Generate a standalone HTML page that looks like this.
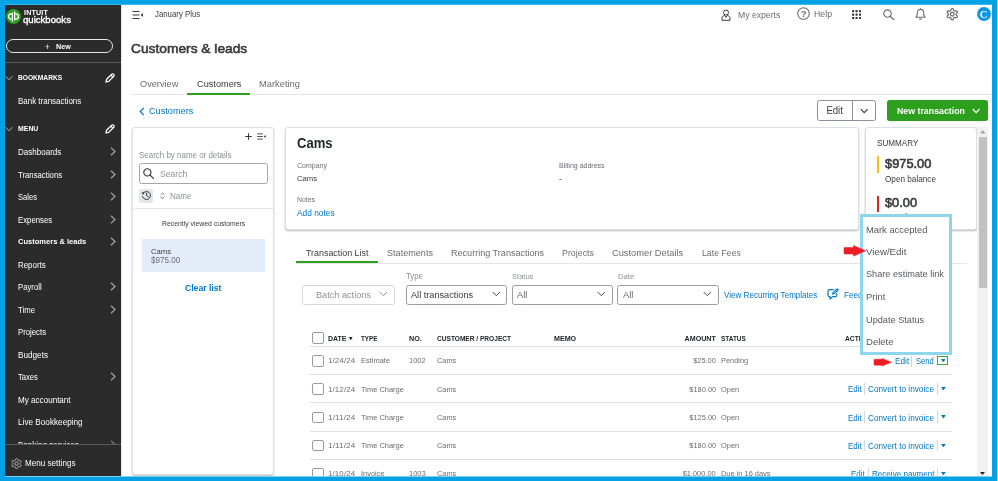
<!DOCTYPE html>
<html><head><meta charset="utf-8"><title>QuickBooks</title>
<style>
html,body{margin:0;padding:0}
body{width:998px;height:481px;overflow:hidden;position:relative;background:#04a1e5;font-family:"Liberation Sans", sans-serif;}
#root{position:absolute;left:0;top:0;width:998px;height:481px;overflow:hidden;filter:blur(0.3px)}
#root span{display:block}
</style></head><body><div id="root">
<div style="position:absolute;left:5px;top:5px;width:987px;height:471px;background:#fff"></div>
<div style="position:absolute;left:5px;top:4px;width:987px;height:1px;background:#35b4ee"></div>
<div style="position:absolute;left:5px;top:4.5px;width:115.6px;height:471.5px;background:#2b2b2b"></div>
<div style="position:absolute;left:120.5px;top:5px;width:1px;height:471px;background:#e4e4e4"></div>
<svg style="position:absolute;left:6px;top:8.7px;" width="15" height="15" viewBox="0 0 15 15"><circle cx="7.5" cy="7.5" r="7.5" fill="#2ca01c"/><g fill="none" stroke="#fff" stroke-width="1.25" stroke-linecap="round"><path d="M6.3 4.9H5.2a2.6 2.6 0 0 0 0 5.2H6.3"/><path d="M6.4 4.2V12.2" /><path d="M8.7 10.1H9.8a2.6 2.6 0 0 0 0-5.2H8.7"/><path d="M8.6 2.8V10.8"/></g></svg>
<span style="position:absolute;top:2.50px;height:20px;line-height:20px;font-size:6.30px;font-weight:700;color:#fff;white-space:pre;left:23.60px;transform-origin:0 50%;transform:scaleX(1.130);letter-spacing:0.15px;">INTUIT</span>
<span style="position:absolute;top:10.20px;height:20px;line-height:20px;font-size:9.70px;font-weight:400;color:#fff;white-space:pre;left:23.00px;transform-origin:0 50%;transform:scaleX(0.989);-webkit-text-stroke:0.35px #fff;">quickbooks</span>
<div style="position:absolute;left:6px;top:39px;width:107px;height:14px;box-sizing:border-box;border:1px solid #e8e8e8;border-radius:7px"></div>
<span style="position:absolute;top:36.90px;height:20px;line-height:20px;font-size:9.00px;font-weight:400;color:#fff;white-space:pre;left:45.00px;transform-origin:0 50%;transform:scaleX(0.913);">+</span>
<span style="position:absolute;top:36.90px;height:20px;line-height:20px;font-size:7.56px;font-weight:700;color:#fff;white-space:pre;left:56.00px;transform-origin:0 50%;transform:scaleX(0.952);">New</span>
<div style="position:absolute;left:5px;top:62px;width:116px;height:1px;background:#5a5a5a"></div>
<svg style="position:absolute;left:5px;top:75.2px;" width="8" height="6" viewBox="0 0 8 6"><path d="M0.6 1.2L4 4.8L7.4 1.2" fill="none" stroke="#b0b0b0" stroke-width="1"/></svg>
<span style="position:absolute;top:68.40px;height:20px;line-height:20px;font-size:6.96px;font-weight:700;color:#fff;white-space:pre;left:17.80px;transform-origin:0 50%;transform:scaleX(0.952);">BOOKMARKS</span>
<svg style="position:absolute;left:105.2px;top:73.3px;" width="10" height="10" viewBox="0 0 10 10"><g fill="none" stroke="#fff" stroke-width="1.25" stroke-linejoin="round"><path d="M1 9L1.6 6.3L6.7 1.2a1.3 1.3 0 0 1 1.9 0l0.2 0.2a1.3 1.3 0 0 1 0 1.9L3.7 8.4Z"/><path d="M5.8 2.1L7.9 4.2"/></g></svg>
<span style="position:absolute;top:91.00px;height:20px;line-height:20px;font-size:8.37px;font-weight:400;color:#fff;white-space:pre;left:17.80px;transform-origin:0 50%;transform:scaleX(0.952);">Bank transactions</span>
<svg style="position:absolute;left:5px;top:125.9px;" width="8" height="6" viewBox="0 0 8 6"><path d="M0.6 1.2L4 4.8L7.4 1.2" fill="none" stroke="#b0b0b0" stroke-width="1"/></svg>
<span style="position:absolute;top:119.10px;height:20px;line-height:20px;font-size:7.27px;font-weight:700;color:#fff;white-space:pre;left:17.80px;transform-origin:0 50%;transform:scaleX(0.952);">MENU</span>
<svg style="position:absolute;left:105.2px;top:124px;" width="10" height="10" viewBox="0 0 10 10"><g fill="none" stroke="#fff" stroke-width="1.25" stroke-linejoin="round"><path d="M1 9L1.6 6.3L6.7 1.2a1.3 1.3 0 0 1 1.9 0l0.2 0.2a1.3 1.3 0 0 1 0 1.9L3.7 8.4Z"/><path d="M5.8 2.1L7.9 4.2"/></g></svg>
<span style="position:absolute;top:141.70px;height:20px;line-height:20px;font-size:8.45px;font-weight:400;color:#fff;white-space:pre;left:17.80px;transform-origin:0 50%;transform:scaleX(0.952);">Dashboards</span>
<svg style="position:absolute;left:109.5px;top:146.89999999999998px;" width="6" height="9" viewBox="0 0 6 9"><path d="M1 0.8L5 4.5L1 8.2" fill="none" stroke="#a0a0a0" stroke-width="1.25"/></svg>
<span style="position:absolute;top:164.50px;height:20px;line-height:20px;font-size:8.45px;font-weight:400;color:#fff;white-space:pre;left:17.80px;transform-origin:0 50%;transform:scaleX(0.919);">Transactions</span>
<svg style="position:absolute;left:109.5px;top:169.7px;" width="6" height="9" viewBox="0 0 6 9"><path d="M1 0.8L5 4.5L1 8.2" fill="none" stroke="#a0a0a0" stroke-width="1.25"/></svg>
<span style="position:absolute;top:187.00px;height:20px;line-height:20px;font-size:8.45px;font-weight:400;color:#fff;white-space:pre;left:17.80px;transform-origin:0 50%;transform:scaleX(0.899);">Sales</span>
<svg style="position:absolute;left:109.5px;top:192.2px;" width="6" height="9" viewBox="0 0 6 9"><path d="M1 0.8L5 4.5L1 8.2" fill="none" stroke="#a0a0a0" stroke-width="1.25"/></svg>
<span style="position:absolute;top:209.50px;height:20px;line-height:20px;font-size:8.45px;font-weight:400;color:#fff;white-space:pre;left:17.80px;transform-origin:0 50%;transform:scaleX(0.921);">Expenses</span>
<svg style="position:absolute;left:109.5px;top:214.7px;" width="6" height="9" viewBox="0 0 6 9"><path d="M1 0.8L5 4.5L1 8.2" fill="none" stroke="#a0a0a0" stroke-width="1.25"/></svg>
<span style="position:absolute;top:232.00px;height:20px;line-height:20px;font-size:7.98px;font-weight:700;color:#fff;white-space:pre;left:17.80px;transform-origin:0 50%;transform:scaleX(0.945);">Customers &amp; leads</span>
<svg style="position:absolute;left:109.5px;top:237.2px;" width="6" height="9" viewBox="0 0 6 9"><path d="M1 0.8L5 4.5L1 8.2" fill="none" stroke="#a0a0a0" stroke-width="1.25"/></svg>
<span style="position:absolute;top:254.50px;height:20px;line-height:20px;font-size:8.45px;font-weight:400;color:#fff;white-space:pre;left:17.80px;transform-origin:0 50%;transform:scaleX(0.936);">Reports</span>
<span style="position:absolute;top:277.00px;height:20px;line-height:20px;font-size:8.45px;font-weight:400;color:#fff;white-space:pre;left:17.80px;transform-origin:0 50%;transform:scaleX(0.917);">Payroll</span>
<svg style="position:absolute;left:109.5px;top:282.2px;" width="6" height="9" viewBox="0 0 6 9"><path d="M1 0.8L5 4.5L1 8.2" fill="none" stroke="#a0a0a0" stroke-width="1.25"/></svg>
<span style="position:absolute;top:299.50px;height:20px;line-height:20px;font-size:8.45px;font-weight:400;color:#fff;white-space:pre;left:17.80px;transform-origin:0 50%;transform:scaleX(0.926);">Time</span>
<svg style="position:absolute;left:109.5px;top:304.7px;" width="6" height="9" viewBox="0 0 6 9"><path d="M1 0.8L5 4.5L1 8.2" fill="none" stroke="#a0a0a0" stroke-width="1.25"/></svg>
<span style="position:absolute;top:322.00px;height:20px;line-height:20px;font-size:8.45px;font-weight:400;color:#fff;white-space:pre;left:17.80px;transform-origin:0 50%;transform:scaleX(0.920);">Projects</span>
<span style="position:absolute;top:344.50px;height:20px;line-height:20px;font-size:8.45px;font-weight:400;color:#fff;white-space:pre;left:17.80px;transform-origin:0 50%;transform:scaleX(0.970);">Budgets</span>
<span style="position:absolute;top:367.00px;height:20px;line-height:20px;font-size:8.45px;font-weight:400;color:#fff;white-space:pre;left:17.80px;transform-origin:0 50%;transform:scaleX(0.897);">Taxes</span>
<svg style="position:absolute;left:109.5px;top:372.2px;" width="6" height="9" viewBox="0 0 6 9"><path d="M1 0.8L5 4.5L1 8.2" fill="none" stroke="#a0a0a0" stroke-width="1.25"/></svg>
<span style="position:absolute;top:389.50px;height:20px;line-height:20px;font-size:8.45px;font-weight:400;color:#fff;white-space:pre;left:17.80px;transform-origin:0 50%;transform:scaleX(0.959);">My accountant</span>
<span style="position:absolute;top:412.00px;height:20px;line-height:20px;font-size:8.45px;font-weight:400;color:#fff;white-space:pre;left:17.80px;transform-origin:0 50%;transform:scaleX(0.971);">Live Bookkeeping</span>
<div style="position:absolute;left:5px;top:430px;width:115px;height:14.3px;overflow:hidden">
<span style="position:absolute;top:4.70px;height:20px;line-height:20px;font-size:8.45px;font-weight:400;color:#fff;white-space:pre;left:12.80px;transform-origin:0 50%;transform:scaleX(0.952);">Banking services</span>
<svg style="position:absolute;left:104.5px;top:9.5px;" width="6" height="9" viewBox="0 0 6 9"><path d="M1 0.8L5 4.5L1 8.2" fill="none" stroke="#b0b0b0" stroke-width="1"/></svg>
</div>
<div style="position:absolute;left:5px;top:444px;width:116px;height:1px;background:#5a5a5a"></div>
<svg style="position:absolute;left:11.2px;top:458px;" width="11.2" height="11.2" viewBox="0 0 12 12"><g fill="none" stroke="#b8b8b8" stroke-width="1.05" stroke-linejoin="round"><path d="M6.00 0.60L6.47 0.62L6.90 0.89L7.18 1.61L7.34 2.32L7.56 2.65L7.85 2.80L8.12 2.97L8.51 3.00L9.22 2.78L9.97 2.67L10.42 2.90L10.68 3.30L10.89 3.72L10.87 4.23L10.39 4.82L9.85 5.32L9.69 5.68L9.70 6.00L9.69 6.32L9.85 6.68L10.39 7.18L10.87 7.77L10.89 8.28L10.68 8.70L10.42 9.10L9.97 9.33L9.22 9.22L8.51 9.00L8.12 9.03L7.85 9.20L7.56 9.35L7.34 9.68L7.18 10.39L6.90 11.11L6.47 11.38L6.00 11.40L5.53 11.38L5.10 11.11L4.82 10.39L4.66 9.68L4.44 9.35L4.15 9.20L3.88 9.03L3.49 9.00L2.78 9.22L2.03 9.33L1.58 9.10L1.32 8.70L1.11 8.28L1.13 7.77L1.61 7.18L2.15 6.68L2.31 6.32L2.30 6.00L2.31 5.68L2.15 5.32L1.61 4.82L1.13 4.23L1.11 3.72L1.32 3.30L1.58 2.90L2.03 2.67L2.78 2.78L3.49 3.00L3.88 2.97L4.15 2.80L4.44 2.65L4.66 2.32L4.82 1.61L5.10 0.89L5.53 0.62Z"/><circle cx="6" cy="6" r="1.75"/></g></svg>
<span style="position:absolute;top:453.20px;height:20px;line-height:20px;font-size:8.53px;font-weight:400;color:#fff;white-space:pre;left:24.80px;transform-origin:0 50%;transform:scaleX(0.952);">Menu settings</span>
<svg style="position:absolute;left:131.5px;top:9.5px;" width="12" height="10" viewBox="0 0 12 10"><g stroke="#393a3d" stroke-width="1.2" fill="none"><path d="M0.5 1.5H7.5M0.5 5H7.5M0.5 8.5H7.5"/></g><path d="M11 3L8.7 5L11 7Z" fill="#393a3d"/></svg>
<span style="position:absolute;top:4.80px;height:20px;line-height:20px;font-size:8.23px;font-weight:400;color:#393a3d;white-space:pre;left:155.40px;transform-origin:0 50%;transform:scaleX(0.952);">January Plus</span>
<svg style="position:absolute;left:720.5px;top:8.6px;" width="10" height="12" viewBox="0 0 10 12"><g fill="none" stroke="#393a3d" stroke-width="1" stroke-linejoin="round"><circle cx="5" cy="3.5" r="2.5"/><path d="M1 11.3V9.2C1 7.6 2.4 6.6 3.6 6.4L5 8.3L6.4 6.4C7.6 6.6 9 7.6 9 9.2V11.3Z"/></g></svg>
<span style="position:absolute;top:5.40px;height:20px;line-height:20px;font-size:9.08px;font-weight:400;color:#6b6c72;white-space:pre;left:737.50px;transform-origin:0 50%;transform:scaleX(0.952);">My experts</span>
<svg style="position:absolute;left:797.3px;top:7.1px;" width="13" height="13" viewBox="0 0 13 13"><circle cx="6.5" cy="6.5" r="5.8" fill="none" stroke="#6b6c72" stroke-width="1.1"/></svg>
<span style="position:absolute;top:4.30px;height:20px;line-height:20px;font-size:9.00px;font-weight:700;color:#6b6c72;white-space:pre;left:801.05px;transform-origin:50% 50%;">?</span>
<span style="position:absolute;top:4.20px;height:20px;line-height:20px;font-size:9.24px;font-weight:400;color:#6b6c72;white-space:pre;left:814.20px;transform-origin:0 50%;transform:scaleX(0.952);">Help</span>
<svg style="position:absolute;left:852.3px;top:9.9px;" width="9.2" height="9.2" viewBox="0 0 9.2 9.2"><rect x="0" y="0" width="2.2" height="2.2" rx="0.5" fill="#393a3d"/><rect x="0" y="3.5" width="2.2" height="2.2" rx="0.5" fill="#393a3d"/><rect x="0" y="7" width="2.2" height="2.2" rx="0.5" fill="#393a3d"/><rect x="3.5" y="0" width="2.2" height="2.2" rx="0.5" fill="#393a3d"/><rect x="3.5" y="3.5" width="2.2" height="2.2" rx="0.5" fill="#393a3d"/><rect x="3.5" y="7" width="2.2" height="2.2" rx="0.5" fill="#393a3d"/><rect x="7" y="0" width="2.2" height="2.2" rx="0.5" fill="#393a3d"/><rect x="7" y="3.5" width="2.2" height="2.2" rx="0.5" fill="#393a3d"/><rect x="7" y="7" width="2.2" height="2.2" rx="0.5" fill="#393a3d"/></svg>
<svg style="position:absolute;left:883px;top:8.5px;" width="11.8" height="11.8" viewBox="0 0 12 12"><g fill="none" stroke="#6b6c72" stroke-width="1.2" stroke-linecap="round"><circle cx="4.6" cy="4.6" r="3.8"/><path d="M7.4 7.4L11.2 11.2"/></g></svg>
<svg style="position:absolute;left:914.5px;top:8.3px;" width="11" height="12" viewBox="0 0 11 12"><g fill="none" stroke="#6b6c72" stroke-width="1.1" stroke-linejoin="round"><path d="M1 9.2C2.2 8.2 2.3 6.9 2.3 5.2C2.3 3 3.6 1.4 5.5 1.4C7.4 1.4 8.7 3 8.7 5.2C8.7 6.9 8.8 8.2 10 9.2Z"/><path d="M4.3 10.6C4.6 11.3 6.4 11.3 6.7 10.6"/><path d="M5.5 0.4V1.4"/></g></svg>
<svg style="position:absolute;left:945.9px;top:8px;" width="12.5" height="12.5" viewBox="0 0 12 12"><g fill="none" stroke="#6b6c72" stroke-width="1.15" stroke-linejoin="round"><path d="M6.00 0.60L6.47 0.62L6.90 0.89L7.18 1.61L7.34 2.32L7.56 2.65L7.85 2.80L8.12 2.97L8.51 3.00L9.22 2.78L9.97 2.67L10.42 2.90L10.68 3.30L10.89 3.72L10.87 4.23L10.39 4.82L9.85 5.32L9.69 5.68L9.70 6.00L9.69 6.32L9.85 6.68L10.39 7.18L10.87 7.77L10.89 8.28L10.68 8.70L10.42 9.10L9.97 9.33L9.22 9.22L8.51 9.00L8.12 9.03L7.85 9.20L7.56 9.35L7.34 9.68L7.18 10.39L6.90 11.11L6.47 11.38L6.00 11.40L5.53 11.38L5.10 11.11L4.82 10.39L4.66 9.68L4.44 9.35L4.15 9.20L3.88 9.03L3.49 9.00L2.78 9.22L2.03 9.33L1.58 9.10L1.32 8.70L1.11 8.28L1.13 7.77L1.61 7.18L2.15 6.68L2.31 6.32L2.30 6.00L2.31 5.68L2.15 5.32L1.61 4.82L1.13 4.23L1.11 3.72L1.32 3.30L1.58 2.90L2.03 2.67L2.78 2.78L3.49 3.00L3.88 2.97L4.15 2.80L4.44 2.65L4.66 2.32L4.82 1.61L5.10 0.89L5.53 0.62Z"/><circle cx="6" cy="6" r="1.75"/></g></svg>
<svg style="position:absolute;left:976.6px;top:7.3px;" width="14" height="14" viewBox="0 0 14 14"><circle cx="7" cy="7" r="6.9" fill="#0d96e8"/></svg>
<span style="position:absolute;top:4.60px;height:20px;line-height:20px;font-size:10.50px;font-weight:700;color:#fff;white-space:pre;left:979.81px;transform-origin:50% 50%;font-family:'Liberation Serif',serif;">C</span>
<span style="position:absolute;top:39.00px;height:20px;line-height:20px;font-size:13.50px;font-weight:400;color:#393a3d;white-space:pre;left:130.80px;transform-origin:0 50%;transform:scaleX(1.019);-webkit-text-stroke:0.6px #393a3d;">Customers &amp; leads</span>
<span style="position:absolute;top:74.00px;height:20px;line-height:20px;font-size:9.67px;font-weight:400;color:#6b6c72;white-space:pre;left:139.70px;transform-origin:0 50%;transform:scaleX(0.952);">Overview</span>
<span style="position:absolute;top:74.00px;height:20px;line-height:20px;font-size:9.66px;font-weight:400;color:#393a3d;white-space:pre;left:196.60px;transform-origin:0 50%;transform:scaleX(0.952);">Customers</span>
<span style="position:absolute;top:74.00px;height:20px;line-height:20px;font-size:9.80px;font-weight:400;color:#6b6c72;white-space:pre;left:259.20px;transform-origin:0 50%;transform:scaleX(0.952);">Marketing</span>
<div style="position:absolute;left:131px;top:94.3px;width:861px;height:1px;background:#e3e5e8"></div>
<div style="position:absolute;left:187px;top:92.8px;width:63px;height:2px;background:#2ca01c"></div>
<svg style="position:absolute;left:139px;top:106.5px;" width="6" height="9" viewBox="0 0 6 9"><path d="M4.8 0.8L1.2 4.5L4.8 8.2" fill="none" stroke="#0077c5" stroke-width="1.2"/></svg>
<span style="position:absolute;top:101.30px;height:20px;line-height:20px;font-size:9.64px;font-weight:400;color:#0077c5;white-space:pre;left:148.80px;transform-origin:0 50%;transform:scaleX(0.952);">Customers</span>
<div style="position:absolute;left:816.6px;top:100px;width:59px;height:20.6px;box-sizing:border-box;border:1px solid #8d9096;border-radius:2.5px;background:#fff"></div>
<div style="position:absolute;left:852px;top:100.5px;width:1px;height:19.6px;background:#8d9096"></div>
<span style="position:absolute;top:100.90px;height:20px;line-height:20px;font-size:10.05px;font-weight:400;color:#393a3d;white-space:pre;left:825.84px;transform-origin:50% 50%;transform:scaleX(0.952);">Edit</span>
<svg style="position:absolute;left:860px;top:107.5px;" width="8.4" height="6" viewBox="0 0 8.4 6"><path d="M0.8 1L4.2 4.6L7.6 1" fill="none" stroke="#393a3d" stroke-width="1.1"/></svg>
<div style="position:absolute;left:887.4px;top:100px;width:100.4px;height:20.6px;background:#2ca01c;border-radius:2.5px"></div>
<span style="position:absolute;top:101.00px;height:20px;line-height:20px;font-size:9.24px;font-weight:700;color:#fff;white-space:pre;left:897.00px;transform-origin:0 50%;transform:scaleX(0.952);">New transaction</span>
<svg style="position:absolute;left:971.5px;top:107.7px;" width="8.4" height="6" viewBox="0 0 8.4 6"><path d="M0.8 1L4.2 4.6L7.6 1" fill="none" stroke="#fff" stroke-width="1.2"/></svg>
<div style="position:absolute;left:132.2px;top:126.8px;width:141.6px;height:348px;box-sizing:border-box;background:#fff;border:1px solid #dcdfe3;border-radius:3px;box-shadow:0 1px 2px rgba(0,0,0,0.28);"></div>
<svg style="position:absolute;left:245px;top:133px;" width="7" height="7" viewBox="0 0 7 7"><path d="M3.5 0.2V6.8M0.2 3.5H6.8" stroke="#393a3d" stroke-width="1" fill="none"/></svg>
<svg style="position:absolute;left:257.4px;top:133.2px;" width="9" height="7" viewBox="0 0 9 7"><g stroke="#393a3d" stroke-width="0.9" fill="none"><path d="M0.2 0.9H5.8M0.2 3.5H5.8M0.2 6.1H5.8"/></g><path d="M8.6 2.1L6.7 3.5L8.6 4.9Z" fill="#393a3d"/></svg>
<span style="position:absolute;top:145.20px;height:20px;line-height:20px;font-size:8.37px;font-weight:400;color:#8d9096;white-space:pre;left:139.00px;transform-origin:0 50%;transform:scaleX(0.952);">Search by name or details</span>
<div style="position:absolute;left:139px;top:163px;width:128.6px;height:20.6px;box-sizing:border-box;border:1px solid #a4a7ad;border-radius:2.5px;background:#fff"></div>
<svg style="position:absolute;left:143px;top:167.7px;" width="11.4" height="11.4" viewBox="0 0 12 12"><g fill="none" stroke="#393a3d" stroke-width="1.2" stroke-linecap="round"><circle cx="4.6" cy="4.6" r="3.8"/><path d="M7.4 7.4L11.2 11.2"/></g></svg>
<span style="position:absolute;top:164.10px;height:20px;line-height:20px;font-size:9.05px;font-weight:400;color:#8d9096;white-space:pre;left:160.00px;transform-origin:0 50%;transform:scaleX(0.952);">Search</span>
<div style="position:absolute;left:139px;top:188.8px;width:14px;height:13.8px;background:#e3e5e8;border-radius:2px"></div>
<svg style="position:absolute;left:140.7px;top:190.4px;" width="10.6" height="10.6" viewBox="0 0 10.6 10.6"><g fill="none" stroke="#393a3d" stroke-width="1" stroke-linecap="round"><path d="M2.2 3.2A4 4 0 1 1 1.6 6.6"/><path d="M5.6 3.2V5.6L7.2 6.6"/></g><path d="M0.6 2.2L3.6 2.6L2 4.9Z" fill="#393a3d"/></svg>
<svg style="position:absolute;left:160px;top:192.3px;" width="5" height="7.4" viewBox="0 0 5 7.4"><g fill="none" stroke="#6b6c72" stroke-width="0.9"><path d="M0.7 2.7L2.5 0.9L4.3 2.7"/><path d="M0.7 4.7L2.5 6.5L4.3 4.7"/></g></svg>
<span style="position:absolute;top:186.40px;height:20px;line-height:20px;font-size:8.46px;font-weight:400;color:#8d9096;white-space:pre;left:170.00px;transform-origin:0 50%;transform:scaleX(0.952);">Name</span>
<div style="position:absolute;left:133.5px;top:208px;width:139.3px;height:1px;background:#e3e5e8"></div>
<span style="position:absolute;top:214.40px;height:20px;line-height:20px;font-size:7.19px;font-weight:400;color:#393a3d;white-space:pre;left:161.60px;transform-origin:0 50%;transform:scaleX(0.952);">Recently viewed customers</span>
<div style="position:absolute;left:142px;top:239.2px;width:123px;height:33.3px;background:#e4ecf9"></div>
<span style="position:absolute;top:241.80px;height:20px;line-height:20px;font-size:8.04px;font-weight:400;color:#393a3d;white-space:pre;left:151.00px;transform-origin:0 50%;transform:scaleX(0.952);">Cams</span>
<span style="position:absolute;top:250.20px;height:20px;line-height:20px;font-size:8.48px;font-weight:400;color:#6b6c72;white-space:pre;left:151.00px;transform-origin:0 50%;transform:scaleX(0.952);">$975.00</span>
<span style="position:absolute;top:278.40px;height:20px;line-height:20px;font-size:9.05px;font-weight:700;color:#0077c5;white-space:pre;left:185.20px;transform-origin:0 50%;transform:scaleX(0.952);">Clear list</span>
<div style="position:absolute;left:284.5px;top:126.8px;width:574.5px;height:103.4px;box-sizing:border-box;background:#fff;border:1px solid #dcdfe3;border-radius:3px;box-shadow:0 1px 2px rgba(0,0,0,0.28);"></div>
<span style="position:absolute;top:133.90px;height:20px;line-height:20px;font-size:13.72px;font-weight:700;color:#21262a;white-space:pre;left:297.00px;transform-origin:0 50%;transform:scaleX(0.952);">Cams</span>
<span style="position:absolute;top:156.00px;height:20px;line-height:20px;font-size:7.36px;font-weight:400;color:#6b6c72;white-space:pre;left:297.00px;transform-origin:0 50%;transform:scaleX(0.952);">Company</span>
<span style="position:absolute;top:168.80px;height:20px;line-height:20px;font-size:8.04px;font-weight:400;color:#393a3d;white-space:pre;left:297.00px;transform-origin:0 50%;transform:scaleX(0.952);">Cams</span>
<span style="position:absolute;top:189.80px;height:20px;line-height:20px;font-size:7.23px;font-weight:400;color:#6b6c72;white-space:pre;left:297.00px;transform-origin:0 50%;transform:scaleX(0.952);">Notes</span>
<span style="position:absolute;top:203.30px;height:20px;line-height:20px;font-size:8.77px;font-weight:400;color:#0077c5;white-space:pre;left:297.00px;transform-origin:0 50%;transform:scaleX(0.952);">Add notes</span>
<span style="position:absolute;top:156.00px;height:20px;line-height:20px;font-size:7.36px;font-weight:400;color:#6b6c72;white-space:pre;left:558.80px;transform-origin:0 50%;transform:scaleX(0.952);">Billing address</span>
<span style="position:absolute;top:168.60px;height:20px;line-height:20px;font-size:8.50px;font-weight:400;color:#393a3d;white-space:pre;left:559.00px;transform-origin:0 50%;">-</span>
<div style="position:absolute;left:864.5px;top:126.8px;width:112.6px;height:103.4px;box-sizing:border-box;background:#fff;border:1px solid #dcdfe3;border-radius:3px;box-shadow:0 1px 2px rgba(0,0,0,0.28);"></div>
<span style="position:absolute;top:132.90px;height:20px;line-height:20px;font-size:8.53px;font-weight:400;color:#393a3d;white-space:pre;left:876.60px;transform-origin:0 50%;transform:scaleX(0.952);">SUMMARY</span>
<div style="position:absolute;left:876.6px;top:156px;width:2.2px;height:17px;background:#ffbf00"></div>
<span style="position:absolute;top:154.40px;height:20px;line-height:20px;font-size:12.60px;font-weight:400;color:#393a3d;white-space:pre;left:885.20px;transform-origin:0 50%;transform:scaleX(1.019);-webkit-text-stroke:0.6px #393a3d;">$975.00</span>
<span style="position:absolute;top:168.90px;height:20px;line-height:20px;font-size:8.60px;font-weight:400;color:#393a3d;white-space:pre;left:885.20px;transform-origin:0 50%;transform:scaleX(0.952);">Open balance</span>
<div style="position:absolute;left:876.6px;top:195.5px;width:2.2px;height:16.5px;background:#e0241c"></div>
<span style="position:absolute;top:193.40px;height:20px;line-height:20px;font-size:12.60px;font-weight:400;color:#393a3d;white-space:pre;left:885.20px;transform-origin:0 50%;transform:scaleX(1.015);-webkit-text-stroke:0.6px #393a3d;">$0.00</span>
<span style="position:absolute;top:206.90px;height:20px;line-height:20px;font-size:8.45px;font-weight:400;color:#393a3d;white-space:pre;left:885.20px;transform-origin:0 50%;transform:scaleX(0.952);">Overdue payment</span>
<div style="position:absolute;left:977.4px;top:126.8px;width:10.4px;height:349.2px;background:#f1f1f1"></div>
<div style="position:absolute;left:978.8px;top:137px;width:7.8px;height:150.6px;background:#c1c1c1"></div>
<svg style="position:absolute;left:980px;top:130.4px;" width="5.6" height="3.4" viewBox="0 0 5.6 3.4"><path d="M0 3.4L2.8 0.2L5.6 3.4Z" fill="#a3a3a3"/></svg>
<svg style="position:absolute;left:980.2px;top:472.4px;" width="5" height="3.2" viewBox="0 0 5 3.2"><path d="M0 0L2.5 3L5 0Z" fill="#222"/></svg>
<span style="position:absolute;top:242.90px;height:20px;line-height:20px;font-size:9.35px;font-weight:400;color:#393a3d;white-space:pre;left:305.60px;transform-origin:0 50%;transform:scaleX(0.952);">Transaction List</span>
<span style="position:absolute;top:242.90px;height:20px;line-height:20px;font-size:9.55px;font-weight:400;color:#6b6c72;white-space:pre;left:386.50px;transform-origin:0 50%;transform:scaleX(0.952);">Statements</span>
<span style="position:absolute;top:242.90px;height:20px;line-height:20px;font-size:9.52px;font-weight:400;color:#6b6c72;white-space:pre;left:450.60px;transform-origin:0 50%;transform:scaleX(0.952);">Recurring Transactions</span>
<span style="position:absolute;top:242.90px;height:20px;line-height:20px;font-size:9.30px;font-weight:400;color:#6b6c72;white-space:pre;left:562.00px;transform-origin:0 50%;transform:scaleX(0.952);">Projects</span>
<span style="position:absolute;top:242.90px;height:20px;line-height:20px;font-size:9.75px;font-weight:400;color:#6b6c72;white-space:pre;left:612.40px;transform-origin:0 50%;transform:scaleX(0.952);">Customer Details</span>
<span style="position:absolute;top:242.90px;height:20px;line-height:20px;font-size:9.21px;font-weight:400;color:#6b6c72;white-space:pre;left:701.70px;transform-origin:0 50%;transform:scaleX(0.952);">Late Fees</span>
<div style="position:absolute;left:296px;top:263px;width:671px;height:1px;background:#e3e5e8"></div>
<div style="position:absolute;left:296px;top:261.2px;width:81.6px;height:2.2px;background:#2ca01c"></div>
<span style="position:absolute;top:267.00px;height:20px;line-height:20px;font-size:8.23px;font-weight:400;color:#8d9096;white-space:pre;left:406.00px;transform-origin:0 50%;transform:scaleX(0.952);">Type</span>
<span style="position:absolute;top:267.00px;height:20px;line-height:20px;font-size:7.93px;font-weight:400;color:#8d9096;white-space:pre;left:512.00px;transform-origin:0 50%;transform:scaleX(0.952);">Status</span>
<span style="position:absolute;top:267.00px;height:20px;line-height:20px;font-size:8.05px;font-weight:400;color:#8d9096;white-space:pre;left:618.00px;transform-origin:0 50%;transform:scaleX(0.952);">Date</span>
<div style="position:absolute;left:302px;top:285px;width:92.6px;height:19.6px;box-sizing:border-box;border:1px solid #d4d7dc;border-radius:2.5px;background:#fff"></div>
<span style="position:absolute;top:285.00px;height:20px;line-height:20px;font-size:9.62px;font-weight:400;color:#8d9096;white-space:pre;left:316.00px;transform-origin:0 50%;transform:scaleX(0.952);">Batch actions</span>
<svg style="position:absolute;left:378.5px;top:291.4px;" width="8.6" height="6" viewBox="0 0 8.6 6"><path d="M0.7 1L4.3 4.7L7.9 1" fill="none" stroke="#8d9096" stroke-width="1"/></svg>
<div style="position:absolute;left:405.6px;top:285px;width:101.2px;height:19.6px;box-sizing:border-box;border:1px solid #9a9da3;border-radius:2.5px;background:#fff"></div>
<span style="position:absolute;top:285.00px;height:20px;line-height:20px;font-size:9.63px;font-weight:400;color:#393a3d;white-space:pre;left:411.00px;transform-origin:0 50%;transform:scaleX(0.952);">All transactions</span>
<svg style="position:absolute;left:491.6px;top:291.4px;" width="8.6" height="6" viewBox="0 0 8.6 6"><path d="M0.7 1L4.3 4.7L7.9 1" fill="none" stroke="#4a4c50" stroke-width="1"/></svg>
<div style="position:absolute;left:511.5px;top:285px;width:101.2px;height:19.6px;box-sizing:border-box;border:1px solid #9a9da3;border-radius:2.5px;background:#fff"></div>
<span style="position:absolute;top:285.00px;height:20px;line-height:20px;font-size:9.83px;font-weight:400;color:#6b6c72;white-space:pre;left:517.00px;transform-origin:0 50%;transform:scaleX(0.952);">All</span>
<svg style="position:absolute;left:597.2px;top:291.4px;" width="8.6" height="6" viewBox="0 0 8.6 6"><path d="M0.7 1L4.3 4.7L7.9 1" fill="none" stroke="#4a4c50" stroke-width="1"/></svg>
<div style="position:absolute;left:617.4px;top:285px;width:101.2px;height:19.6px;box-sizing:border-box;border:1px solid #9a9da3;border-radius:2.5px;background:#fff"></div>
<span style="position:absolute;top:285.00px;height:20px;line-height:20px;font-size:9.83px;font-weight:400;color:#6b6c72;white-space:pre;left:623.00px;transform-origin:0 50%;transform:scaleX(0.952);">All</span>
<svg style="position:absolute;left:703.2px;top:291.4px;" width="8.6" height="6" viewBox="0 0 8.6 6"><path d="M0.7 1L4.3 4.7L7.9 1" fill="none" stroke="#4a4c50" stroke-width="1"/></svg>
<span style="position:absolute;top:284.50px;height:20px;line-height:20px;font-size:8.47px;font-weight:400;color:#0077c5;white-space:pre;left:723.60px;transform-origin:0 50%;transform:scaleX(0.952);">View Recurring Templates</span>
<svg style="position:absolute;left:827px;top:288.4px;" width="12.4" height="12" viewBox="0 0 12.4 12"><g fill="none" stroke="#0077c5" stroke-width="1.15" stroke-linejoin="round" stroke-linecap="round"><path d="M6.4 1.6H2.4A1.4 1.4 0 0 0 1 3V7.2A1.4 1.4 0 0 0 2.4 8.6H3V11L5.6 8.6H8.4A1.4 1.4 0 0 0 9.8 7.2V5.6"/><path d="M5.6 6.2L6 4.6L10 0.8L11.2 2L7.2 5.8Z"/></g></svg>
<span style="position:absolute;top:284.80px;height:20px;line-height:20px;font-size:8.61px;font-weight:400;color:#0077c5;white-space:pre;left:844.40px;transform-origin:0 50%;transform:scaleX(0.952);">Feedback</span>
<div style="position:absolute;left:312px;top:332.2px;width:11.6px;height:11.6px;box-sizing:border-box;border:1px solid #989ba1;border-radius:2px;background:#fff"></div>
<span style="position:absolute;top:328.70px;height:20px;line-height:20px;font-size:7.30px;font-weight:700;color:#21262a;white-space:pre;left:327.60px;transform-origin:0 50%;transform:scaleX(0.952);">DATE</span>
<svg style="position:absolute;left:349px;top:336.6px;" width="3.6" height="3.4" viewBox="0 0 3.6 3.4"><path d="M0 0H3.6L1.8 3.4Z" fill="#21262a"/></svg>
<span style="position:absolute;top:328.70px;height:20px;line-height:20px;font-size:6.59px;font-weight:700;color:#21262a;white-space:pre;left:360.60px;transform-origin:0 50%;transform:scaleX(0.952);">TYPE</span>
<span style="position:absolute;top:328.70px;height:20px;line-height:20px;font-size:7.56px;font-weight:700;color:#21262a;white-space:pre;left:408.70px;transform-origin:0 50%;transform:scaleX(0.952);">NO.</span>
<span style="position:absolute;top:328.70px;height:20px;line-height:20px;font-size:6.92px;font-weight:700;color:#21262a;white-space:pre;left:436.80px;transform-origin:0 50%;transform:scaleX(0.952);">CUSTOMER / PROJECT</span>
<span style="position:absolute;top:328.70px;height:20px;line-height:20px;font-size:7.49px;font-weight:700;color:#21262a;white-space:pre;left:553.80px;transform-origin:0 50%;transform:scaleX(0.952);">MEMO</span>
<span style="position:absolute;top:328.70px;height:20px;line-height:20px;font-size:7.47px;font-weight:700;color:#21262a;white-space:pre;left:682.94px;transform-origin:100% 50%;transform:scaleX(0.952);">AMOUNT</span>
<span style="position:absolute;top:328.70px;height:20px;line-height:20px;font-size:6.76px;font-weight:700;color:#21262a;white-space:pre;left:720.80px;transform-origin:0 50%;transform:scaleX(0.952);">STATUS</span>
<span style="position:absolute;top:328.70px;height:20px;line-height:20px;font-size:7.01px;font-weight:700;color:#21262a;white-space:pre;left:845.00px;transform-origin:0 50%;transform:scaleX(0.952);">ACTION</span>
<div style="position:absolute;left:310.4px;top:345.8px;width:641.6px;height:1px;background:#dcdfe3"></div>
<div style="position:absolute;left:312px;top:355.2px;width:11.6px;height:11.6px;box-sizing:border-box;border:1px solid #989ba1;border-radius:2px;background:#fff"></div>
<span style="position:absolute;top:351.40px;height:20px;line-height:20px;font-size:7.85px;font-weight:400;color:#6b6c72;white-space:pre;left:327.60px;transform-origin:0 50%;transform:scaleX(1.009);letter-spacing:0.12px;">1/24/24</span>
<span style="position:absolute;top:351.40px;height:20px;line-height:20px;font-size:7.85px;font-weight:400;color:#6b6c72;white-space:pre;left:360.60px;transform-origin:0 50%;transform:scaleX(0.952);">Estimate</span>
<span style="position:absolute;top:351.40px;height:20px;line-height:20px;font-size:7.90px;font-weight:400;color:#6b6c72;white-space:pre;left:408.80px;transform-origin:0 50%;transform:scaleX(0.952);">1002</span>
<span style="position:absolute;top:351.40px;height:20px;line-height:20px;font-size:7.75px;font-weight:400;color:#6b6c72;white-space:pre;left:436.80px;transform-origin:0 50%;transform:scaleX(0.952);">Cams</span>
<span style="position:absolute;top:351.40px;height:20px;line-height:20px;font-size:7.80px;font-weight:400;color:#6b6c72;white-space:pre;left:691.84px;transform-origin:100% 50%;transform:scaleX(0.952);">$25.00</span>
<span style="position:absolute;top:351.40px;height:20px;line-height:20px;font-size:7.80px;font-weight:400;color:#6b6c72;white-space:pre;left:720.80px;transform-origin:0 50%;transform:scaleX(0.952);">Pending</span>
<div style="position:absolute;left:310.4px;top:374.1px;width:641.6px;height:1px;background:#dcdfe3"></div>
<div style="position:absolute;left:312px;top:383.4px;width:11.6px;height:11.6px;box-sizing:border-box;border:1px solid #989ba1;border-radius:2px;background:#fff"></div>
<span style="position:absolute;top:379.60px;height:20px;line-height:20px;font-size:7.85px;font-weight:400;color:#6b6c72;white-space:pre;left:327.60px;transform-origin:0 50%;transform:scaleX(1.009);letter-spacing:0.12px;">1/12/24</span>
<span style="position:absolute;top:379.60px;height:20px;line-height:20px;font-size:7.85px;font-weight:400;color:#6b6c72;white-space:pre;left:360.60px;transform-origin:0 50%;transform:scaleX(0.952);">Time Charge</span>
<span style="position:absolute;top:379.60px;height:20px;line-height:20px;font-size:7.75px;font-weight:400;color:#6b6c72;white-space:pre;left:436.80px;transform-origin:0 50%;transform:scaleX(0.952);">Cams</span>
<span style="position:absolute;top:379.60px;height:20px;line-height:20px;font-size:7.80px;font-weight:400;color:#6b6c72;white-space:pre;left:687.50px;transform-origin:100% 50%;transform:scaleX(0.952);">$180.00</span>
<span style="position:absolute;top:379.60px;height:20px;line-height:20px;font-size:7.80px;font-weight:400;color:#6b6c72;white-space:pre;left:720.80px;transform-origin:0 50%;transform:scaleX(0.952);">Open</span>
<div style="position:absolute;left:310.4px;top:402.3px;width:641.6px;height:1px;background:#dcdfe3"></div>
<span style="position:absolute;top:379.30px;height:20px;line-height:20px;font-size:8.41px;font-weight:400;color:#0077c5;white-space:pre;left:847.80px;transform-origin:0 50%;transform:scaleX(0.952);">Edit</span>
<div style="position:absolute;left:864.4px;top:383.2px;width:1px;height:11.4px;background:#d4d7dc"></div>
<span style="position:absolute;top:379.30px;height:20px;line-height:20px;font-size:8.66px;font-weight:400;color:#0077c5;white-space:pre;left:868.00px;transform-origin:0 50%;transform:scaleX(0.952);">Convert to invoice</span>
<div style="position:absolute;left:936.8px;top:383.2px;width:1px;height:11.4px;background:#d4d7dc"></div>
<svg style="position:absolute;left:941px;top:387.2px;" width="4.8" height="3.4" viewBox="0 0 4.8 3.4"><path d="M0 0H4.8L2.4 3.4Z" fill="#0077c5"/></svg>
<div style="position:absolute;left:312px;top:411.59999999999997px;width:11.6px;height:11.6px;box-sizing:border-box;border:1px solid #989ba1;border-radius:2px;background:#fff"></div>
<span style="position:absolute;top:407.80px;height:20px;line-height:20px;font-size:7.85px;font-weight:400;color:#6b6c72;white-space:pre;left:327.60px;transform-origin:0 50%;transform:scaleX(1.032);letter-spacing:0.12px;">1/11/24</span>
<span style="position:absolute;top:407.80px;height:20px;line-height:20px;font-size:7.85px;font-weight:400;color:#6b6c72;white-space:pre;left:360.60px;transform-origin:0 50%;transform:scaleX(0.952);">Time Charge</span>
<span style="position:absolute;top:407.80px;height:20px;line-height:20px;font-size:7.75px;font-weight:400;color:#6b6c72;white-space:pre;left:436.80px;transform-origin:0 50%;transform:scaleX(0.952);">Cams</span>
<span style="position:absolute;top:407.80px;height:20px;line-height:20px;font-size:7.80px;font-weight:400;color:#6b6c72;white-space:pre;left:687.50px;transform-origin:100% 50%;transform:scaleX(0.952);">$125.00</span>
<span style="position:absolute;top:407.80px;height:20px;line-height:20px;font-size:7.80px;font-weight:400;color:#6b6c72;white-space:pre;left:720.80px;transform-origin:0 50%;transform:scaleX(0.952);">Open</span>
<div style="position:absolute;left:310.4px;top:430.5px;width:641.6px;height:1px;background:#dcdfe3"></div>
<span style="position:absolute;top:407.50px;height:20px;line-height:20px;font-size:8.41px;font-weight:400;color:#0077c5;white-space:pre;left:847.80px;transform-origin:0 50%;transform:scaleX(0.952);">Edit</span>
<div style="position:absolute;left:864.4px;top:411.4px;width:1px;height:11.4px;background:#d4d7dc"></div>
<span style="position:absolute;top:407.50px;height:20px;line-height:20px;font-size:8.66px;font-weight:400;color:#0077c5;white-space:pre;left:868.00px;transform-origin:0 50%;transform:scaleX(0.952);">Convert to invoice</span>
<div style="position:absolute;left:936.8px;top:411.4px;width:1px;height:11.4px;background:#d4d7dc"></div>
<svg style="position:absolute;left:941px;top:415.4px;" width="4.8" height="3.4" viewBox="0 0 4.8 3.4"><path d="M0 0H4.8L2.4 3.4Z" fill="#0077c5"/></svg>
<div style="position:absolute;left:312px;top:439.8px;width:11.6px;height:11.6px;box-sizing:border-box;border:1px solid #989ba1;border-radius:2px;background:#fff"></div>
<span style="position:absolute;top:436.00px;height:20px;line-height:20px;font-size:7.85px;font-weight:400;color:#6b6c72;white-space:pre;left:327.60px;transform-origin:0 50%;transform:scaleX(1.032);letter-spacing:0.12px;">1/11/24</span>
<span style="position:absolute;top:436.00px;height:20px;line-height:20px;font-size:7.85px;font-weight:400;color:#6b6c72;white-space:pre;left:360.60px;transform-origin:0 50%;transform:scaleX(0.952);">Time Charge</span>
<span style="position:absolute;top:436.00px;height:20px;line-height:20px;font-size:7.75px;font-weight:400;color:#6b6c72;white-space:pre;left:436.80px;transform-origin:0 50%;transform:scaleX(0.952);">Cams</span>
<span style="position:absolute;top:436.00px;height:20px;line-height:20px;font-size:7.80px;font-weight:400;color:#6b6c72;white-space:pre;left:687.50px;transform-origin:100% 50%;transform:scaleX(0.952);">$180.00</span>
<span style="position:absolute;top:436.00px;height:20px;line-height:20px;font-size:7.80px;font-weight:400;color:#6b6c72;white-space:pre;left:720.80px;transform-origin:0 50%;transform:scaleX(0.952);">Open</span>
<div style="position:absolute;left:310.4px;top:458.70000000000005px;width:641.6px;height:1px;background:#dcdfe3"></div>
<span style="position:absolute;top:435.70px;height:20px;line-height:20px;font-size:8.41px;font-weight:400;color:#0077c5;white-space:pre;left:847.80px;transform-origin:0 50%;transform:scaleX(0.952);">Edit</span>
<div style="position:absolute;left:864.4px;top:439.6px;width:1px;height:11.4px;background:#d4d7dc"></div>
<span style="position:absolute;top:435.70px;height:20px;line-height:20px;font-size:8.66px;font-weight:400;color:#0077c5;white-space:pre;left:868.00px;transform-origin:0 50%;transform:scaleX(0.952);">Convert to invoice</span>
<div style="position:absolute;left:936.8px;top:439.6px;width:1px;height:11.4px;background:#d4d7dc"></div>
<svg style="position:absolute;left:941px;top:443.6px;" width="4.8" height="3.4" viewBox="0 0 4.8 3.4"><path d="M0 0H4.8L2.4 3.4Z" fill="#0077c5"/></svg>
<div style="position:absolute;left:312px;top:468.0px;width:11.6px;height:11.6px;box-sizing:border-box;border:1px solid #989ba1;border-radius:2px;background:#fff"></div>
<span style="position:absolute;top:464.20px;height:20px;line-height:20px;font-size:7.85px;font-weight:400;color:#6b6c72;white-space:pre;left:327.60px;transform-origin:0 50%;transform:scaleX(1.009);letter-spacing:0.12px;">1/10/24</span>
<span style="position:absolute;top:464.20px;height:20px;line-height:20px;font-size:7.85px;font-weight:400;color:#6b6c72;white-space:pre;left:360.60px;transform-origin:0 50%;transform:scaleX(0.952);">Invoice</span>
<span style="position:absolute;top:464.20px;height:20px;line-height:20px;font-size:7.90px;font-weight:400;color:#6b6c72;white-space:pre;left:408.80px;transform-origin:0 50%;transform:scaleX(0.952);">1003</span>
<span style="position:absolute;top:464.20px;height:20px;line-height:20px;font-size:7.75px;font-weight:400;color:#6b6c72;white-space:pre;left:436.80px;transform-origin:0 50%;transform:scaleX(0.952);">Cams</span>
<span style="position:absolute;top:464.20px;height:20px;line-height:20px;font-size:7.80px;font-weight:400;color:#6b6c72;white-space:pre;left:681.00px;transform-origin:100% 50%;transform:scaleX(0.952);">$1,000.00</span>
<span style="position:absolute;top:464.20px;height:20px;line-height:20px;font-size:7.80px;font-weight:400;color:#6b6c72;white-space:pre;left:720.80px;transform-origin:0 50%;transform:scaleX(0.952);">Due in 16 days</span>
<div style="position:absolute;left:310.4px;top:486.90000000000003px;width:641.6px;height:1px;background:#dcdfe3"></div>
<span style="position:absolute;top:463.90px;height:20px;line-height:20px;font-size:8.41px;font-weight:400;color:#0077c5;white-space:pre;left:851.00px;transform-origin:0 50%;transform:scaleX(0.952);">Edit</span>
<div style="position:absolute;left:867.6px;top:467.8px;width:1px;height:11.4px;background:#d4d7dc"></div>
<span style="position:absolute;top:463.90px;height:20px;line-height:20px;font-size:8.49px;font-weight:400;color:#0077c5;white-space:pre;left:871.50px;transform-origin:0 50%;transform:scaleX(0.952);">Receive payment</span>
<div style="position:absolute;left:936.8px;top:467.8px;width:1px;height:11.4px;background:#d4d7dc"></div>
<svg style="position:absolute;left:941px;top:471.8px;" width="4.8" height="3.4" viewBox="0 0 4.8 3.4"><path d="M0 0H4.8L2.4 3.4Z" fill="#0077c5"/></svg>
<span style="position:absolute;top:351.30px;height:20px;line-height:20px;font-size:8.60px;font-weight:400;color:#0077c5;white-space:pre;left:894.90px;transform-origin:0 50%;transform:scaleX(0.958);">Edit</span>
<div style="position:absolute;left:911.4px;top:355.5px;width:1px;height:11px;background:#d0d3d8"></div>
<span style="position:absolute;top:351.30px;height:20px;line-height:20px;font-size:8.60px;font-weight:400;color:#0077c5;white-space:pre;left:915.60px;transform-origin:0 50%;transform:scaleX(0.886);">Send</span>
<div style="position:absolute;left:937px;top:355.5px;width:11.3px;height:9.5px;box-sizing:border-box;border:1.3px solid #3fa832;background:#fff"></div>
<svg style="position:absolute;left:940.5px;top:358.8px;" width="4.7" height="3.2" viewBox="0 0 4.7 3.2"><path d="M0 0H4.8L2.4 3.4Z" fill="#0077c5"/></svg>
<div style="position:absolute;left:860.2px;top:214.4px;width:91.8px;height:140.6px;box-sizing:border-box;border:3.2px solid #8fd6ec;background:#fff"></div>
<span style="position:absolute;top:219.70px;height:20px;line-height:20px;font-size:9.85px;font-weight:400;color:#55575c;white-space:pre;left:866.00px;transform-origin:0 50%;transform:scaleX(0.950);">Mark accepted</span>
<span style="position:absolute;top:241.80px;height:20px;line-height:20px;font-size:9.85px;font-weight:400;color:#55575c;white-space:pre;left:866.00px;transform-origin:0 50%;transform:scaleX(0.988);">View/Edit</span>
<span style="position:absolute;top:264.40px;height:20px;line-height:20px;font-size:9.85px;font-weight:400;color:#55575c;white-space:pre;left:866.00px;transform-origin:0 50%;transform:scaleX(0.931);">Share estimate link</span>
<span style="position:absolute;top:287.20px;height:20px;line-height:20px;font-size:9.85px;font-weight:400;color:#55575c;white-space:pre;left:866.00px;transform-origin:0 50%;transform:scaleX(0.958);">Print</span>
<span style="position:absolute;top:309.80px;height:20px;line-height:20px;font-size:9.85px;font-weight:400;color:#55575c;white-space:pre;left:866.00px;transform-origin:0 50%;transform:scaleX(0.932);">Update Status</span>
<span style="position:absolute;top:332.20px;height:20px;line-height:20px;font-size:9.85px;font-weight:400;color:#55575c;white-space:pre;left:866.00px;transform-origin:0 50%;transform:scaleX(0.969);">Delete</span>
<svg style="position:absolute;left:844px;top:244.79999999999998px;overflow:visible;" width="21.8" height="11.6" viewBox="0 0 21.8 11.6"><path d="M0.8 2.50H9.40V0.4L21.80 5.80L9.40 11.20V9.10H0.8Q0 9.10 0 8.30V3.30Q0 2.50 0.8 2.50Z" fill="#ed1c24" stroke="#ed1c24" stroke-width="0.5" stroke-linejoin="round"/></svg>
<svg style="position:absolute;left:874px;top:357.5px;overflow:visible;" width="17.5" height="8.4" viewBox="0 0 17.5 8.4"><path d="M0.8 1.20H8.10V0.4L17.50 4.20L8.10 8.00V7.20H0.8Q0 7.20 0 6.40V2.00Q0 1.20 0.8 1.20Z" fill="#ed1c24" stroke="#ed1c24" stroke-width="0.5" stroke-linejoin="round"/></svg>
<div style="position:absolute;left:0px;top:476px;width:998px;height:5px;background:#04a1e5"></div>
<div style="position:absolute;left:5px;top:475.6px;width:987px;height:0.6px;background:#7fcdf3"></div>
<div style="position:absolute;left:997px;top:0px;width:1px;height:481px;background:#9fd9f5"></div>
</div></body></html>
